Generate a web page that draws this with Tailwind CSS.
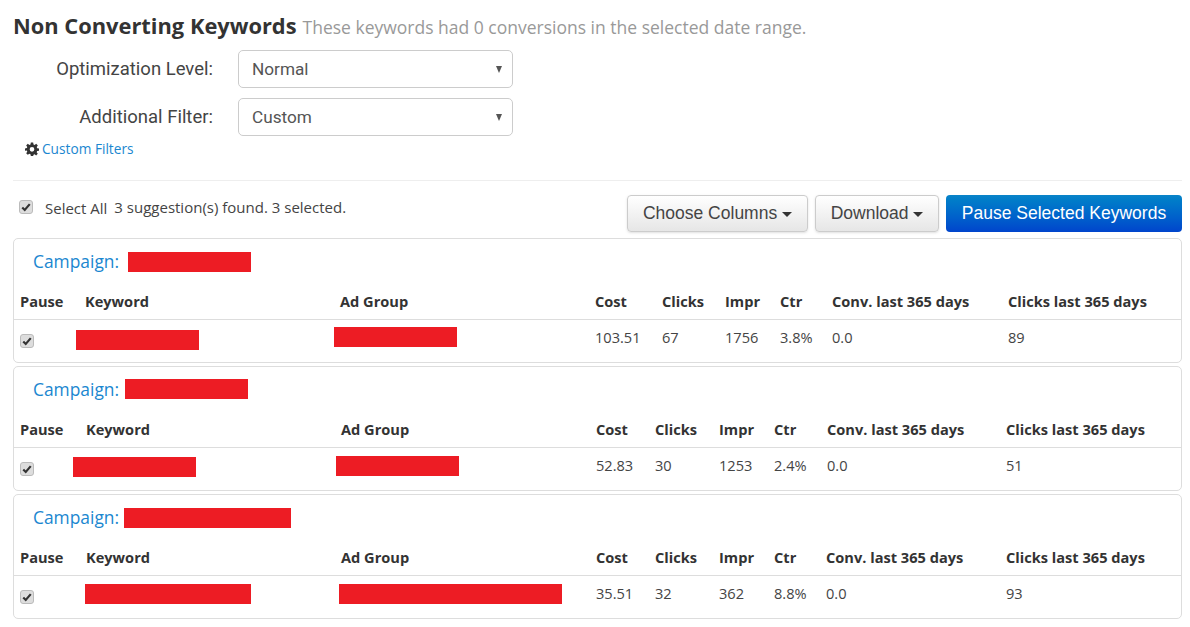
<!DOCTYPE html>
<html>

<head>
    <title>Non Converting Keywords</title>
    <script src="https://cdn.jsdelivr.net/npm/@tailwindcss/browser@4"></script>
</head>

<body class="bg-white text-[#333] font-['Open_Sans',sans-serif] text-sm overflow-hidden">
    <div class="w-[1190px] h-[627px] px-[13px] pr-2">
        <h1 class="pt-[12px] h-[50px] flex items-baseline">
            <span class="text-[21.85px] leading-[28px] font-bold text-[#333]">Non Converting Keywords</span>
            <span class="ml-[6px] text-[17.5px] leading-[26px] text-[#999]">These keywords had 0 conversions in the selected date range.</span>
        </h1>

        <div class="flex items-center h-[38px]">
            <label class="w-[200px] text-right font-['Roboto',sans-serif] text-[18.5px] text-[#444]">Optimization Level:</label>
            <div class="ml-[25px] w-[275px] h-[38px] border border-[#ccc] rounded-[5px] pl-[13px] pr-[10px] flex items-center justify-between font-['Roboto',sans-serif] text-[17.2px] text-[#555]">
                <span>Normal</span><span class="w-0 h-0 border-x-[3.5px] border-x-transparent border-t-[7px] border-t-[#555]"></span>
            </div>
        </div>
        <div class="flex items-center h-[38px] mt-[10px]">
            <label class="w-[200px] text-right font-['Roboto',sans-serif] text-[18.5px] text-[#444]">Additional Filter:</label>
            <div class="ml-[25px] w-[275px] h-[38px] border border-[#ccc] rounded-[5px] pl-[13px] pr-[10px] flex items-center justify-between font-['Roboto',sans-serif] text-[17.2px] text-[#555]">
                <span>Custom</span><span class="w-0 h-0 border-x-[3.5px] border-x-transparent border-t-[7px] border-t-[#555]"></span>
            </div>
        </div>
        <div class="flex items-center mt-[3px] ml-[12px] h-[20px]">
            <svg class="w-[14px] h-[14px] text-[#333]" viewBox="0 0 24 24" fill="currentColor"><path fill-rule="evenodd" d="M10 1h4l.6 3.200 1.900.8 2.700-1.900 2.800 2.800-1.900 2.700.8 1.900L24 11v4l-3.200.6-.8 1.900 1.900 2.700-2.800 2.800-2.700-1.900-1.800.7L14 24h-4l-.6-3.200-1.900-.7-2.700 1.900-2.800-2.800 1.900-2.700-.8-1.900L0 15v-4l3.200-.6.7-1.900L2 5.900 4.800 3.100l2.700 1.900 1.900-.8zM12 8.500a4 4 0 1 0 0 8 4 4 0 0 0 0-8z"/></svg>
            <a class="ml-[3px] text-[13.7px] text-[#1b87d0]">Custom Filters</a>
        </div>

        <hr class="mt-[21px] border-[#eee]">

        <div class="flex justify-between h-[57px]">
            <div class="flex items-start pt-[17px] pl-[6px] text-[15px] text-[#444]">
                <div class="w-[14px] h-[14px] mt-[2px] rounded-[3px] border border-[#bbb] bg-[#ddd] flex items-center justify-center">
                    <svg class="w-[10px] h-[10px] text-[#333]" viewBox="0 0 12 12" fill="none" stroke="currentColor" stroke-width="2.6"><path d="M1.500 6.500 4.500 9.500 10.500 2.500"/></svg>
                </div>
                <span class="ml-[12px] leading-[20px]">Select All</span>
                <span class="ml-[7px] leading-[19px]">3 suggestion(s) found. 3 selected.</span>
            </div>
            <div class="flex items-start pt-[14px] font-['Liberation_Sans',sans-serif] text-[17.5px]">
                <button class="h-[37px] w-[181px] rounded-[4px] border border-[#ccc] bg-linear-to-b from-white to-[#e6e6e6] text-[#444] shadow-sm">Choose Columns <span class="inline-block align-middle w-0 h-0 border-x-[5px] border-x-transparent border-t-[5px] border-t-[#333]"></span></button>
                <button class="ml-[7px] h-[37px] w-[124px] rounded-[4px] border border-[#ccc] bg-linear-to-b from-white to-[#e6e6e6] text-[#444] shadow-sm">Download <span class="inline-block align-middle w-0 h-0 border-x-[5px] border-x-transparent border-t-[5px] border-t-[#333]"></span></button>
                <button class="ml-[7px] h-[37px] w-[236px] rounded-[4px] bg-linear-to-b from-[#0a84c8] to-[#0044cc] text-white">Pause Selected Keywords</button>
            </div>
        </div>

        <!-- campaign 1 -->
        <div class="w-[1169px] h-[125px] border border-[#ddd] rounded-[5px] overflow-hidden">
            <div class="h-[46px] pl-[19px] flex items-center text-[17.4px] text-[#1b87d0]">
                <span class="mb-[2px]">Campaign:</span><span class="ml-[9px] w-[123px] h-[20px] bg-[#ed1c24]"></span>
            </div>
            <table class="table-fixed w-[1167px] text-[14.6px] text-[#444]">
                <colgroup>
                    <col class="w-[65px]"><col class="w-[255px]"><col class="w-[255px]"><col class="w-[67px]"><col class="w-[63px]"><col class="w-[55px]"><col class="w-[52px]"><col class="w-[176px]"><col>
                </colgroup>
                <thead>
                    <tr class="h-[34px] border-b border-[#ddd] text-left text-[#333] font-bold">
                        <th class="pl-[6px]">Pause</th><th class="pl-[6px]">Keyword</th><th class="pl-[6px]">Ad Group</th><th class="pl-[6px]">Cost</th><th class="pl-[6px]">Clicks</th><th class="pl-[6px]">Impr</th><th class="pl-[6px]">Ctr</th><th class="pl-[6px]">Conv. last 365 days</th><th class="pl-[6px]">Clicks last 365 days</th>
                    </tr>
                </thead>
                <tbody>
                    <tr class="h-[43px] align-top">
                        <td class="pl-[6px]"><div class="w-[14px] h-[14px] mt-[14px] rounded-[3px] border border-[#bbb] bg-[#ddd] flex items-center justify-center"><svg class="w-[10px] h-[10px] text-[#333]" viewBox="0 0 12 12" fill="none" stroke="currentColor" stroke-width="2.6"><path d="M1.500 6.500 4.500 9.500 10.500 2.500"/></svg></div></td>
                        <td><div class="ml-[-3px] mt-[10px] w-[123px] h-[20px] bg-[#ed1c24]"></div></td>
                        <td><div class="mt-[7px] w-[123px] h-[20px] bg-[#ed1c24]"></div></td>
                        <td class="pl-[6px] pt-[7px]">103.51</td><td class="pl-[6px] pt-[7px]">67</td><td class="pl-[6px] pt-[7px]">1756</td><td class="pl-[6px] pt-[7px]">3.8%</td><td class="pl-[6px] pt-[7px]">0.0</td><td class="pl-[6px] pt-[7px]">89</td>
                    </tr>
                </tbody>
            </table>
        </div>

        <!-- campaign 2 -->
        <div class="mt-[3px] w-[1169px] h-[125px] border border-[#ddd] rounded-[5px] overflow-hidden">
            <div class="h-[46px] pl-[19px] flex items-center text-[17.4px] text-[#1b87d0]">
                <span class="mb-[2px]">Campaign:</span><span class="ml-[6px] mb-[2px] w-[123px] h-[20px] bg-[#ed1c24]"></span>
            </div>
            <table class="table-fixed w-[1167px] text-[14.6px] text-[#444]">
                <colgroup>
                    <col class="w-[66px]"><col class="w-[255px]"><col class="w-[255px]"><col class="w-[59px]"><col class="w-[64px]"><col class="w-[55px]"><col class="w-[53px]"><col class="w-[179px]"><col>
                </colgroup>
                <thead>
                    <tr class="h-[34px] border-b border-[#ddd] text-left text-[#333] font-bold">
                        <th class="pl-[6px]">Pause</th><th class="pl-[6px]">Keyword</th><th class="pl-[6px]">Ad Group</th><th class="pl-[6px]">Cost</th><th class="pl-[6px]">Clicks</th><th class="pl-[6px]">Impr</th><th class="pl-[6px]">Ctr</th><th class="pl-[6px]">Conv. last 365 days</th><th class="pl-[6px]">Clicks last 365 days</th>
                    </tr>
                </thead>
                <tbody>
                    <tr class="h-[43px] align-top">
                        <td class="pl-[6px]"><div class="w-[14px] h-[14px] mt-[14px] rounded-[3px] border border-[#bbb] bg-[#ddd] flex items-center justify-center"><svg class="w-[10px] h-[10px] text-[#333]" viewBox="0 0 12 12" fill="none" stroke="currentColor" stroke-width="2.6"><path d="M1.500 6.500 4.500 9.500 10.500 2.500"/></svg></div></td>
                        <td><div class="ml-[-7px] mt-[9px] w-[123px] h-[20px] bg-[#ed1c24]"></div></td>
                        <td><div class="ml-[1px] mt-[8px] w-[123px] h-[20px] bg-[#ed1c24]"></div></td>
                        <td class="pl-[6px] pt-[7px]">52.83</td><td class="pl-[6px] pt-[7px]">30</td><td class="pl-[6px] pt-[7px]">1253</td><td class="pl-[6px] pt-[7px]">2.4%</td><td class="pl-[6px] pt-[7px]">0.0</td><td class="pl-[6px] pt-[7px]">51</td>
                    </tr>
                </tbody>
            </table>
        </div>

        <!-- campaign 3 -->
        <div class="mt-[3px] w-[1169px] h-[125px] border border-[#ddd] rounded-[5px] overflow-hidden">
            <div class="h-[46px] pl-[19px] flex items-center text-[17.4px] text-[#1b87d0]">
                <span class="mb-[2px]">Campaign:</span><span class="ml-[5px] w-[167px] h-[20px] bg-[#ed1c24]"></span>
            </div>
            <table class="table-fixed w-[1167px] text-[14.6px] text-[#444]">
                <colgroup>
                    <col class="w-[66px]"><col class="w-[255px]"><col class="w-[255px]"><col class="w-[59px]"><col class="w-[64px]"><col class="w-[55px]"><col class="w-[52px]"><col class="w-[180px]"><col>
                </colgroup>
                <thead>
                    <tr class="h-[34px] border-b border-[#ddd] text-left text-[#333] font-bold">
                        <th class="pl-[6px]">Pause</th><th class="pl-[6px]">Keyword</th><th class="pl-[6px]">Ad Group</th><th class="pl-[6px]">Cost</th><th class="pl-[6px]">Clicks</th><th class="pl-[6px]">Impr</th><th class="pl-[6px]">Ctr</th><th class="pl-[6px]">Conv. last 365 days</th><th class="pl-[6px]">Clicks last 365 days</th>
                    </tr>
                </thead>
                <tbody>
                    <tr class="h-[43px] align-top">
                        <td class="pl-[6px]"><div class="w-[14px] h-[14px] mt-[14px] rounded-[3px] border border-[#bbb] bg-[#ddd] flex items-center justify-center"><svg class="w-[10px] h-[10px] text-[#333]" viewBox="0 0 12 12" fill="none" stroke="currentColor" stroke-width="2.6"><path d="M1.500 6.500 4.500 9.500 10.500 2.500"/></svg></div></td>
                        <td><div class="ml-[5px] mt-[8px] w-[166px] h-[20px] bg-[#ed1c24]"></div></td>
                        <td><div class="ml-[4px] mt-[8px] w-[223px] h-[20px] bg-[#ed1c24]"></div></td>
                        <td class="pl-[6px] pt-[7px]">35.51</td><td class="pl-[6px] pt-[7px]">32</td><td class="pl-[6px] pt-[7px]">362</td><td class="pl-[6px] pt-[7px]">8.8%</td><td class="pl-[6px] pt-[7px]">0.0</td><td class="pl-[6px] pt-[7px]">93</td>
                    </tr>
                </tbody>
            </table>
        </div>
    </div>
</body>

</html>
